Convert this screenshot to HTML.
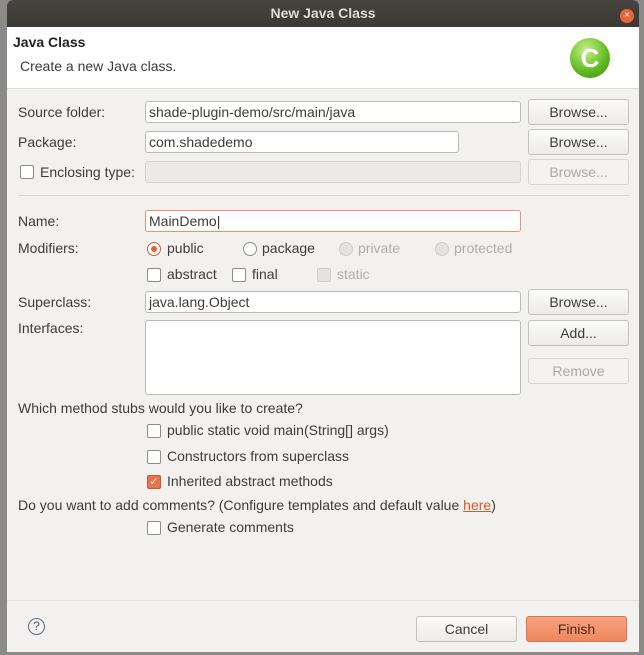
<!DOCTYPE html>
<html><head><style>
body{margin:0;width:644px;height:655px;background:#8a8a88;position:relative;overflow:hidden;font-family:"Liberation Sans",sans-serif;font-size:14px;color:#3c3c3c}
.a{position:absolute}
.dlg{left:7px;top:0;width:632px;height:652px;background:#f2f1f0;border-radius:6px 6px 0 0;overflow:hidden}
.tb{left:0;top:0;width:100%;height:27px;background:linear-gradient(#45443f,#3b3a36);color:#dfdbd2;font-weight:bold;text-align:center;line-height:27px;font-size:14px}
.hd{left:0;top:27px;width:100%;height:61px;background:#fff;border-bottom:1px solid #dcdad5}
.f{position:absolute;height:20px;background:#fff;border:1px solid #bcbab5;border-radius:3px;line-height:20px;padding-left:3px;box-sizing:content-box}
.b{position:absolute;width:99px;height:24px;border:1px solid #c4c2bd;border-radius:3px;background:linear-gradient(#fbfbfa,#ecebe9);text-align:center;line-height:24px;color:#3c3c3c}
.dis{color:#aaa8a4;background:#f4f3f2;border-color:#d6d4d0}
.cb{position:absolute;width:12px;height:12px;border:1px solid #8e8c88;border-radius:2px;background:#fff}
.rd{position:absolute;width:12px;height:12px;border:1px solid #8e8c88;border-radius:50%;background:#fff}
.l{position:absolute;white-space:nowrap}
.g{color:#b0aeaa}
.sep{position:absolute;left:11px;width:612px;height:1px;background:#d8d6d1}
</style></head><body>
<div class="a dlg">
<div class="a tb">New Java Class</div>
<div class="a" style="left:613px;top:9px;width:14px;height:14px;border-radius:50%;background:#e9653a;color:#fff;font-size:10px;line-height:14px;text-align:center">×</div>
<div class="a hd"></div>
<div class="l" style="left:6px;top:34px;font-weight:bold;font-size:14px;color:#222">Java Class</div>
<div class="l" style="left:13px;top:58px">Create a new Java class.</div>
<div class="a" style="left:563px;top:38px;width:40px;height:40px;border-radius:50%;background:radial-gradient(circle at 40% 30%,#c8f08a,#5cb81e 60%,#3d8a10);color:#fff;font-weight:bold;font-size:26px;line-height:40px;text-align:center">C</div>

<div class="l" style="left:11px;top:104px">Source folder:</div>
<div class="f" style="left:138px;top:101px;width:371px">shade-plugin-demo/src/main/java</div>
<div class="b" style="left:521px;top:99px">Browse...</div>
<div class="l" style="left:11px;top:134px">Package:</div>
<div class="f" style="left:138px;top:131px;width:309px">com.shadedemo</div>
<div class="b" style="left:521px;top:129px">Browse...</div>
<div class="cb" style="left:13px;top:165px"></div>
<div class="l" style="left:33px;top:164px">Enclosing type:</div>
<div class="f" style="left:138px;top:161px;width:371px;background:#ebeae8;border-color:#d6d4d0"></div>
<div class="b dis" style="left:521px;top:159px">Browse...</div>
<div class="sep" style="top:195px"></div>

<div class="l" style="left:11px;top:213px">Name:</div>
<div class="f" style="left:138px;top:210px;width:371px;border-color:#e8936a">MainDemo|</div>
<div class="l" style="left:11px;top:240px">Modifiers:</div>
<div class="rd" style="left:140px;top:242px;border-color:#d0603a"><div class="a" style="left:3px;top:3px;width:6px;height:6px;border-radius:50%;background:#e0602e"></div></div>
<div class="l" style="left:160px;top:240px">public</div>
<div class="rd" style="left:236px;top:242px"></div>
<div class="l" style="left:255px;top:240px">package</div>
<div class="rd" style="left:332px;top:242px;background:#e4e3e1;border-color:#ccc"></div>
<div class="l g" style="left:351px;top:240px">private</div>
<div class="rd" style="left:428px;top:242px;background:#e4e3e1;border-color:#ccc"></div>
<div class="l g" style="left:447px;top:240px">protected</div>
<div class="cb" style="left:140px;top:268px"></div>
<div class="l" style="left:160px;top:266px">abstract</div>
<div class="cb" style="left:225px;top:268px"></div>
<div class="l" style="left:245px;top:266px">final</div>
<div class="cb" style="left:310px;top:268px;background:#e4e3e1;border-color:#ccc"></div>
<div class="l g" style="left:330px;top:266px">static</div>

<div class="l" style="left:11px;top:294px">Superclass:</div>
<div class="f" style="left:138px;top:291px;width:371px">java.lang.Object</div>
<div class="b" style="left:521px;top:289px">Browse...</div>
<div class="l" style="left:11px;top:320px">Interfaces:</div>
<div class="f" style="left:138px;top:320px;width:371px;height:73px"></div>
<div class="b" style="left:521px;top:320px">Add...</div>
<div class="b dis" style="left:521px;top:358px">Remove</div>

<div class="l" style="left:11px;top:400px">Which method stubs would you like to create?</div>
<div class="cb" style="left:140px;top:424px"></div>
<div class="l" style="left:160px;top:422px">public static void main(String[] args)</div>
<div class="cb" style="left:140px;top:450px"></div>
<div class="l" style="left:160px;top:448px">Constructors from superclass</div>
<div class="cb" style="left:140px;top:475px;background:#e8734a;border-color:#c85a30;color:#fff;font-size:11px;line-height:12px;text-align:center">✓</div>
<div class="l" style="left:160px;top:473px">Inherited abstract methods</div>
<div class="l" style="left:11px;top:497px">Do you want to add comments? (Configure templates and default value <span style="color:#d8582a;text-decoration:underline">here</span>)</div>
<div class="cb" style="left:140px;top:521px"></div>
<div class="l" style="left:160px;top:519px">Generate comments</div>

<div class="a" style="left:0;top:600px;width:632px;height:1px;background:#e2e0dc"></div>
<div class="a" style="left:21px;top:618px;width:15px;height:15px;border:1.5px solid #5a6a80;border-radius:50%;text-align:center;line-height:15px;font-size:12px;color:#4a5a70">?</div>
<div class="b" style="left:409px;top:616px">Cancel</div>
<div class="b" style="left:519px;top:616px;background:linear-gradient(#f7a27e,#ee8760);border-color:#d87450;color:#4a2a1a">Finish</div>
</div>
</body></html>
